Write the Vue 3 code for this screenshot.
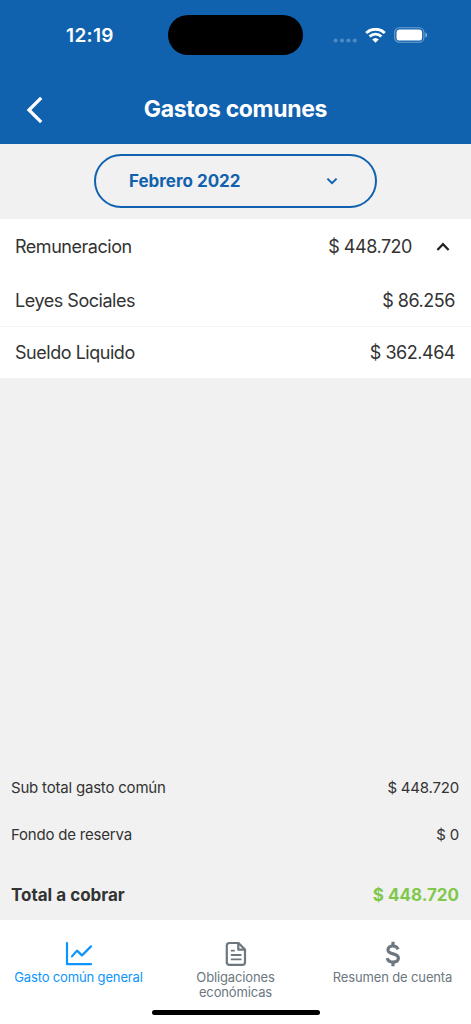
<template>
  <div class="screen">
    <header class="header">
      <div class="status-bar">
        <div class="clock">12:19</div>
        <div class="island"></div>
        <div class="status-icons">
          <svg class="signal" width="25" height="5" viewBox="0 0 25 5">
            <circle v-for="n in 4" :key="n" :cx="n * 6.4 - 3.8" cy="2.5" r="2.1" />
          </svg>
          <svg class="wifi" width="21" height="15" viewBox="0 0 21 15">
            <path d="M1.2 5A13.4 13.4 0 0 1 19.8 5" />
            <path d="M4.6 8.5A8.5 8.5 0 0 1 16.4 8.5" />
            <path class="wifi-dot" d="M7.2 11.5A4.8 4.8 0 0 1 13.8 11.5L10.5 14.8Z" />
          </svg>
          <svg class="battery" width="34" height="16" viewBox="0 0 34 16">
            <rect class="battery-case" x="0.7" y="0.7" width="29.2" height="14.6" rx="4.6" />
            <rect x="2.5" y="2.4" width="25.6" height="11.2" rx="3.2" />
            <path class="battery-tip" d="M31.4 5.4Q33.2 6.3 33.2 8T31.4 10.6Z" />
          </svg>
        </div>
      </div>
      <div class="nav-bar">
        <button class="back" aria-label="Volver">
          <svg width="18" height="28" viewBox="0 0 18 28">
            <path d="M15.2 1.8L3 14L15.2 26.2" />
          </svg>
        </button>
        <h1 class="title">Gastos comunes</h1>
      </div>
    </header>

    <div class="filter">
      <button class="month-select">
        <span class="month">{{ month }}</span>
        <svg width="12" height="8" viewBox="0 0 12 8">
          <path d="M1.4 1.6L6 6.2L10.6 1.6" />
        </svg>
      </button>
    </div>

    <section class="expenses">
      <div class="expense-head" @click="open = !open">
        <span class="expense-name">Remuneracion</span>
        <span class="expense-amount">$ 448.720</span>
        <svg :class="{ closed: !open }" width="14" height="10" viewBox="0 0 14 10">
          <path d="M1.4 8L7 2.2L12.6 8" />
        </svg>
      </div>
      <template v-if="open">
        <div v-for="item in items" :key="item.name" class="expense-row">
          <span class="expense-name">{{ item.name }}</span>
          <span class="expense-amount">{{ item.amount }}</span>
        </div>
      </template>
    </section>

    <section class="summary">
      <div class="summary-row">
        <span>Sub total gasto común</span>
        <span>$ 448.720</span>
      </div>
      <div class="summary-row">
        <span>Fondo de reserva</span>
        <span>$ 0</span>
      </div>
      <div class="summary-total">
        <span>Total a cobrar</span>
        <span class="total-amount">$ 448.720</span>
      </div>
    </section>

    <footer class="tab-bar">
      <nav class="tabs">
        <a class="tab active">
          <svg width="28" height="26" viewBox="0 0 28 26">
            <path d="M2 2V23.2H26" />
            <path d="M7 15.4L12 9.6L17 14.4L26 5.4" />
          </svg>
          <span>Gasto común general</span>
        </a>
        <a class="tab">
          <svg width="22" height="26" viewBox="0 0 22 26">
            <path d="M4.4 2H13.5L20 8.5V21.2Q20 23.8 17.4 23.8H4.4Q1.8 23.8 1.8 21.2V4.6Q1.8 2 4.4 2Z" />
            <path d="M13.3 2.4V8.7H19.6" />
            <path class="thin" d="M6.6 9.7H9M6.6 14H15.8M6.6 18.4H15.8" />
          </svg>
          <span>Obligaciones<br>económicas</span>
        </a>
        <a class="tab">
          <svg class="dollar" width="16" height="26" viewBox="0 0 16 26">
            <path d="M13.1 8.3C12.2 6 10.3 5 7.9 5C5.1 5 3 6.5 3 8.9C3 14.2 13.4 11.5 13.4 17.1C13.4 19.7 11.2 21.2 8.1 21.2C5 21.2 2.9 19.8 2.2 17.2" />
            <path d="M8 0.8V5M8 21V25.2" />
          </svg>
          <span>Resumen de cuenta</span>
        </a>
      </nav>
      <div class="home-indicator"></div>
    </footer>
  </div>
</template>

<script setup>
import { ref } from 'vue';

const month = ref('Febrero 2022');
const open = ref(true);

const items = [
  { name: 'Leyes Sociales', amount: '$ 86.256' },
  { name: 'Sueldo Liquido', amount: '$ 362.464' },
];
</script>

<style>
body {
  margin: 0;
}
</style>

<style scoped>
.screen {
  display: flex;
  flex-direction: column;
  width: 471px;
  height: 1024px;
  overflow: hidden;
  background-color: #f1f1f1;
  color: #333333;
  font-family: Inter, "Liberation Sans", sans-serif;
}
.screen * {
  box-sizing: border-box;
}
button {
  padding: 0;
  border: none;
  background: none;
  font-family: inherit;
}
svg {
  display: block;
  flex-shrink: 0;
  fill: none;
  stroke-width: 2;
}

/* Header */
.header {
  height: 144px;
  flex-shrink: 0;
  background-color: #1162ae;
  color: #ffffff;
}
.status-bar {
  display: grid;
  grid-template-columns: 168px 135px 1fr;
  height: 75px;
  padding-top: 15px;
}
.clock {
  padding-left: 66px;
  font-size: 19px;
  line-height: 41px;
  font-weight: 600;
  letter-spacing: 0.35px;
}
.island {
  height: 40px;
  border-radius: 20px;
  background-color: #000000;
}
.status-icons {
  display: flex;
  height: 40px;
  padding-left: 30px;
  align-items: center;
}
.status-icons svg {
  fill: #ffffff;
}
.status-icons .signal {
  margin-top: 10px;
  opacity: 0.25;
}
.status-icons .wifi {
  margin-left: 7px;
  fill: none;
  stroke: #ffffff;
  stroke-width: 2.9;
}
.wifi .wifi-dot {
  fill: #ffffff;
  stroke: none;
}
.status-icons .battery {
  margin-left: 8px;
}
.battery .battery-case {
  fill: none;
  stroke: #ffffff;
  stroke-width: 1.1;
  opacity: 0.4;
}
.battery .battery-tip {
  opacity: 0.5;
}
.nav-bar {
  display: grid;
  grid-template-columns: 70px 1fr 70px;
  height: 69px;
  align-items: center;
}
.back {
  margin-left: 26px;
}
.back svg {
  stroke: #ffffff;
  stroke-width: 3.3;
}
.title {
  margin: 0;
  padding-bottom: 2px;
  font-size: 23px;
  font-weight: 700;
  letter-spacing: -0.33px;
  text-align: center;
  white-space: nowrap;
}

/* Month picker */
.filter {
  display: flex;
  height: 75px;
  flex-shrink: 0;
  padding-top: 10px;
  justify-content: center;
}
.month-select {
  display: flex;
  width: 283px;
  height: 54px;
  padding: 0 37px 0 33px;
  border: 2px solid #1162ae;
  border-radius: 27px;
  align-items: center;
  justify-content: space-between;
  color: #1162ae;
}
.month {
  font-size: 17px;
  font-weight: 700;
}
.month-select svg {
  stroke: #1162ae;
}

/* Expenses */
.expenses {
  background-color: #ffffff;
  font-size: 18px;
  letter-spacing: -0.47px;
}
.expense-head,
.expense-row {
  display: flex;
  height: 52px;
  padding: 0 16px 0 15px;
  align-items: center;
}
.expense-head {
  height: 55px;
  padding-right: 21px;
  cursor: pointer;
}
.expense-head svg {
  margin-left: 24px;
  stroke: #222222;
  stroke-width: 2.2;
}
.expense-head svg.closed {
  transform: rotate(180deg);
}
.expense-row + .expense-row {
  border-top: 1px solid #f4f4f4;
}
.expense-amount {
  margin-left: auto;
}

/* Summary */
.summary {
  margin-top: auto;
  padding: 0 12px 0 11px;
}
.summary-row,
.summary-total {
  display: flex;
  height: 47px;
  align-items: center;
  justify-content: space-between;
  font-size: 15px;
  letter-spacing: -0.2px;
}
.summary-total {
  height: 50px;
  margin-top: 12px;
  font-size: 17px;
  font-weight: 700;
  letter-spacing: 0;
}
.total-amount {
  color: #80c84b;
}

/* Tab bar */
.tab-bar {
  display: flex;
  height: 104px;
  flex-shrink: 0;
  flex-direction: column;
  align-items: center;
  background-color: #ffffff;
}
.tabs {
  display: grid;
  grid-template-columns: repeat(3, 157px);
  height: 90px;
  padding-top: 21px;
}
.tab {
  display: flex;
  flex-direction: column;
  align-items: center;
  color: #6c7780;
  font-size: 13px;
  line-height: 15px;
  letter-spacing: -0.14px;
  text-align: center;
}
.tab span {
  margin-top: 3px;
  white-space: nowrap;
}
.tab svg {
  stroke: currentColor;
  stroke-width: 2.2;
  stroke-linejoin: round;
  stroke-linecap: round;
}
.tab svg .thin {
  stroke-width: 1.8;
}
.tab .dollar {
  stroke-width: 3.2;
  stroke-linecap: butt;
}
.tab.active {
  color: #0c95fb;
}
.home-indicator {
  width: 168px;
  height: 5px;
  border-radius: 3px;
  background-color: #000000;
}
</style>
